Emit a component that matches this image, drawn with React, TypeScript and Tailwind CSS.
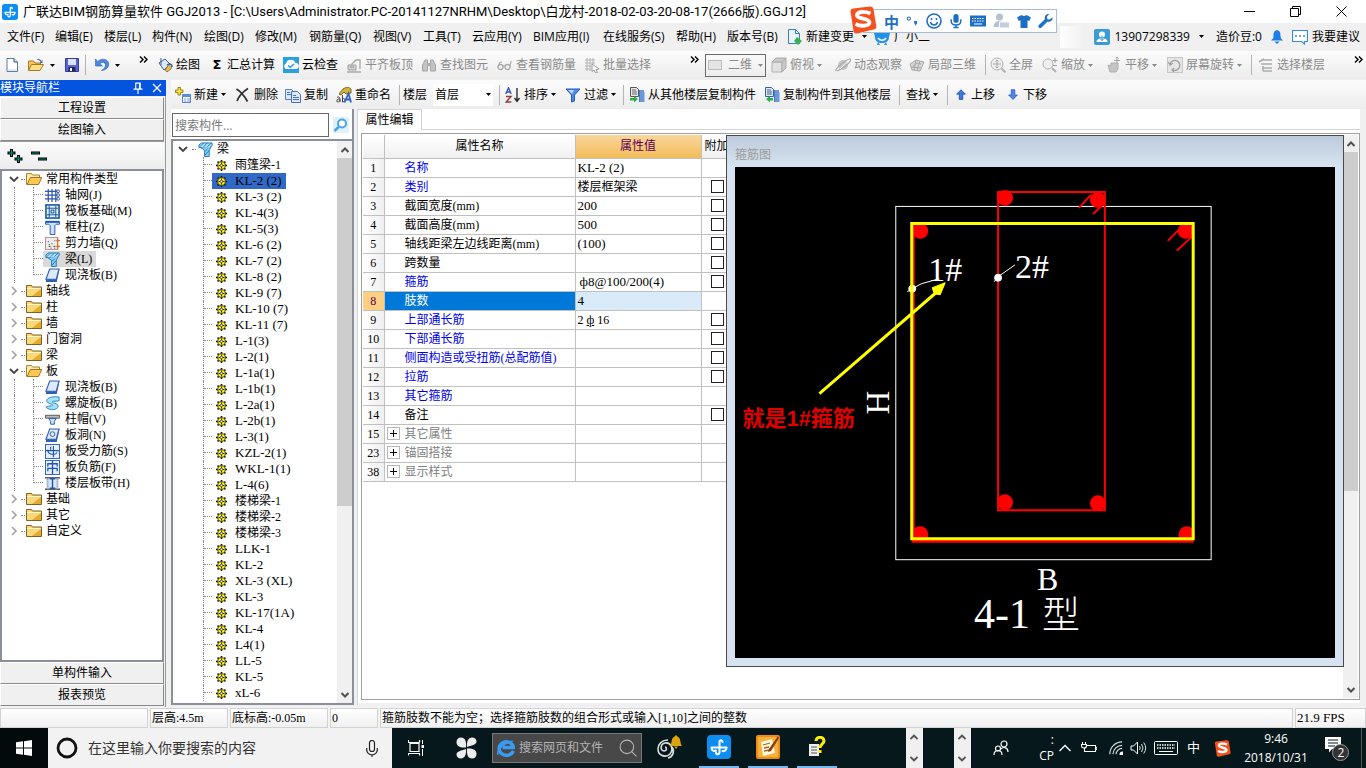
import React from "react";

type Kids = { children?: React.ReactNode };

const UI = "font-['Open_Sans','Noto_Sans_CJK_SC',sans-serif]";
const SONG = "font-['Liberation_Serif','Noto_Sans_CJK_SC',serif]";

const latin = (s: string) => (/^[\x20-\x7f]+$/.test(s) ? "text-[13px]" : "text-xs");

/* ---------- icon helpers ---------- */

function Ico({ children, w = 16, h = 16, box }: Kids & { w?: number; h?: number; box?: string }) {
  return (
    <svg width={w} height={h} viewBox={box ?? "0 0 16 16"} fill="none" className="shrink-0" aria-hidden="true">
      {children}
    </svg>
  );
}

const Caret = () => (
  <svg width="5" height="3" viewBox="0 0 5 3" className="shrink-0" aria-hidden="true">
    <path d="M0 0h5L2.500 3z" fill="currentColor" />
  </svg>
);

const More = () => (
  <Ico w={9} h={7} box="0 0 9 7">
    <path d="M1 .5l3 3-3 3M5 .5l3 3-3 3" stroke="#000" strokeWidth="1.400" />
  </Ico>
);

const AppLogo = ({ size = 16 }: { size?: number }) => (
  <Ico w={size} h={size} box="0 0 24 24">
    <rect width="24" height="24" rx="4" fill="#0c8ff0" />
    <path d="M4.500 12.500h15M12.500 6v11M4.500 12.500c0 3.500 2.500 4 4.500 3M19.500 12.500c0 3-2 4-4 3.500M12.500 6.500c.3-2 3-1.500 3 .5M12.500 17c0 3-3.500 3-3.500.8" stroke="#fff" strokeWidth="2" strokeLinecap="round" />
  </Ico>
);

const icons = {
  newFile: <Ico><path d="M3 1.500h7l3.500 3.500v9.500H3z" fill="#fff" stroke="#5d7aa8" /><path d="M10 1.500V5h3.500" fill="#dbe6f5" stroke="#33507f" /><path d="M4 13h9" stroke="#c4d2ea" /></Ico>,
  open: <Ico w={17}><path d="M1 13V4h5l1.500 2H13v2" fill="#f6c75c" stroke="#a87a1e" /><path d="M1 13.500L4 7.500h12l-3.500 6z" fill="#ffdf86" stroke="#a87a1e" /><path d="M9 3c2-2 4-1 5 1l1-1v3h-3l1-1c-1-2-2-2-4-2z" fill="#4d6ea8" /></Ico>,
  save: <Ico><path d="M1.500 1.500h13v13h-13z" fill="#5a62d8" stroke="#343b9c" /><path d="M4 2h8v6H4z" fill="#dbe4ff" /><path d="M4.500 10h7v4.500h-7z" fill="#20264f" /><path d="M6 11h2v3H6z" fill="#fff" /></Ico>,
  undo: <Ico><path d="M1.500 2v7h7L6 6.800c2-2.500 5.500-1.300 5.500 1.200 0 2.200-1.500 4-4 5.500 5-.5 7.500-3.500 7.200-6.800C14.200 1.800 7.500.6 3.800 4.500z" fill="#4f86dd" stroke="#2d5cb0" strokeWidth=".6" /></Ico>,
  draw: <Ico><path d="M2 6l6-4 5 5-6 6z" fill="#dce9f9" stroke="#3d5f96" /><path d="M4 1v7" stroke="#3d5f96" /><path d="M8 13l4-6 3 1-1 4-4 3z" fill="#e7b84a" stroke="#6b5a2a" strokeWidth=".7" /><path d="M10 8c3-2 5-1 5 2" stroke="#2b63c0" strokeWidth="1.500" /></Ico>,
  cloud: <Ico><rect width="16" height="16" fill="#2b9fe6" /><path d="M3 12a3 3 0 0 1 0-5.500A5 5 0 0 1 12.500 6 3 3 0 0 1 13 12z" fill="#fff" /><path d="M5 8.500l2.200 2L11 7" stroke="#2b9fe6" strokeWidth="1.500" /></Ico>,
  align: <Ico><path d="M2 8h8v5H2z" fill="#d0d0d0" stroke="#a2a2a2" /><path d="M1 15h14M5 8l5-5h4v9M4 10h4" stroke="#a8a8a8" strokeWidth="1.300" /></Ico>,
  find: <Ico><path d="M1.500 14V8L4 3h2.500v11zM14.500 14V8L12 3H9.500v11z" fill="#c4c4c4" stroke="#a4a4a4" /><path d="M6 6h4v3H6z" fill="#adadad" /></Ico>,
  glasses: <Ico><circle cx="3.500" cy="10" r="2.500" stroke="#aaa" strokeWidth="1.300" /><circle cx="10.500" cy="10" r="2.500" stroke="#aaa" strokeWidth="1.300" /><path d="M2 8c0-2 1-3 3-3M13 10c0-3 1-4 1-6M6 9h2" stroke="#aaa" strokeWidth="1.200" /></Ico>,
  batch: <Ico><path d="M1 3h10M1 6h10M1 9h6M1 12h6M3 1v13M6 1v13M9 1v6" stroke="#b4b4b4" /><path d="M8 7l7 5-3 .5 1.500 3-2 .5-1.500-3-2 1.500z" fill="#fff" stroke="#999" /></Ico>,
  cube: <Ico><path d="M1 5h10v10H1z" fill="#e2e2e2" stroke="#b0b0b0" /><path d="M1 5l4-4h10l-4 4zM11 5l4-4v10l-4 4z" fill="#c9c9c9" stroke="#aaa" /></Ico>,
  orbit: <Ico><circle cx="8" cy="8" r="5" fill="#c6c6c6" /><path d="M1 14C0 11 12 2 15 2s-2 7-13 12" stroke="#a8a8a8" strokeWidth="1.200" /><path d="M5 12l7-7" stroke="#eee" /></Ico>,
  local3d: <Ico><path d="M1 7l6-4 8 2-4 9-8-1z" fill="#d6d6d6" stroke="#aaa" /><path d="M4 9l4-3 4 1M7 3l-2 10M11 4L8 13M2 10l10 1" stroke="#aaa" /></Ico>,
  full: <Ico><circle cx="7" cy="7" r="6" stroke="#b4b4b4" fill="#efefef" /><path d="M7 3v8M3 7h8M5.500 4.500L7 3l1.500 1.500M5.500 9.500L7 11l1.500-1.500" stroke="#aaa" /><path d="M11.500 11.500l4 4" stroke="#b0b0b0" strokeWidth="2" /></Ico>,
  zoom: <Ico><circle cx="6" cy="7" r="5" stroke="#b4b4b4" fill="#efefef" /><path d="M10 11l4 4" stroke="#b0b0b0" strokeWidth="2" /><path d="M13 1v5M10.500 3.500h5M11 8.500h4" stroke="#9e9e9e" /></Ico>,
  pan: <Ico><path d="M2 8l3 1V6h7v6l-2 3H4z" fill="#c4c4c4" stroke="#b0b0b0" /><path d="M11 0v7M8 3.500h6M10 1.500L11 0l1.500 1.500" stroke="#a5a5a5" /></Ico>,
  rotate: <Ico><rect x=".5" y=".5" width="15" height="15" fill="#e6e6e6" stroke="#c6c6c6" /><path d="M3 7a5 5 0 1 1 3 6M1.500 5L3 8l3-2M7 15l-2-2 2-2" stroke="#9f9f9f" strokeWidth="1.300" /></Ico>,
  floor: <Ico><path d="M3 3h11M3 7h11M5 9v5M5 11h9M5 14h9M1 5l5-3" stroke="#ababab" strokeWidth="1.500" /></Ico>,
  add: <Ico><path d="M7.500 7.500h8v8h-8z" fill="#f4f8ff" stroke="#5b7fc4" /><path d="M7 7h9v3H7z" fill="#5b8ae0" /><path d="M9 12h2m1 0h3M9 14h2m1 0h3" stroke="#7d9fd8" /><path d="M3 .5h2.500V3H8v2.500H5.500V8H3V5.500H.5V3H3z" fill="#ffe14d" stroke="#9c8411" /></Ico>,
  del: <Ico><path d="M1.500 2C5 4 10 10 12.500 14.500M13 1.500C9 4 4 9 2 14" stroke="#333" strokeWidth="1.800" /></Ico>,
  copy: <Ico><path d="M.5 2.500h6l2 2v8h-8z" fill="#dbe8fc" stroke="#5b7fc4" /><path d="M6.500 4.500h6l3 3v8h-9z" fill="#dbe8fc" stroke="#4b72bc" /><path d="M8 8.500h3M8 10.500h6M8 12.500h6M2 5.500h3M2 7.500h4" stroke="#4b72bc" /></Ico>,
  rename: <Ico><path d="M3 7l4-5c3-2 6-2 8 0v4l-5 1-2-2-3 3z" fill="#d8b33c" stroke="#6f6426" /><path d="M1 10.500c2-1.500 3.500 0 3 4.500M4 12c-4 0-4 3-2 3 1 0 2-1 2-2M6.500 8v7M6.500 12c3-2 3 3 0 3" stroke="#333" strokeWidth=".9" /><path d="M8.500 15.500l4-9 2.500 9M9.500 12.500h4" stroke="#2f63c9" strokeWidth="1.800" /></Ico>,
  sort: <Ico><path d="M.8 7L3.500.8 6.200 7M1.800 5h3.400" stroke="#2b55b5" strokeWidth="1.300" /><path d="M1 9.500h5L1.200 15H6.300" stroke="#943b3b" strokeWidth="1.500" /><path d="M12 1v13M9.500 11l2.500 3.500 2.500-3.500" stroke="#222" strokeWidth="1.300" /></Ico>,
  filter: <Ico><path d="M1 2h14l-5.500 6v6l-3 1V8z" fill="#4f8be8" stroke="#2458b5" /><path d="M3 3h6l-2 4z" fill="#b9d6ff" /></Ico>,
  copyFrom: <Ico><path d="M1.500.5h6l2 2v7h-8z" fill="#e8e8e8" stroke="#555" /><path d="M3 3h4M3 5h5M3 7h5" stroke="#666" /><path d="M11 4h4M10.500 6h5M10.500 8h5M10.500 10h5M10.500 12h5M10.500 14h5" stroke="#3f7cd0" strokeWidth="1.300" /><path d="M1 11h4V9l4 3-4 3.500v-2H1z" fill="#2fae46" /><path d="M10.500 3v12" stroke="#3f7cd0" /></Ico>,
  copyTo: <Ico><path d="M1.500.5h6l2 2v7h-8z" fill="#e8e8e8" stroke="#2d62a8" /><path d="M3 3h4M3 5h5M3 7h5" stroke="#2d62a8" /><path d="M11 4h4M10.500 6h5M10.500 8h5M10.500 10h5M10.500 12h5M10.500 14h5" stroke="#3f7cd0" strokeWidth="1.300" /><path d="M9 11H6V9l-4 3 4 3.500v-2h3z" fill="#2fae46" /><path d="M10.500 3v12" stroke="#3f7cd0" /></Ico>,
  up: <Ico w={14} h={14}><path d="M8 2l5 5h-3v6H6V7H3z" fill="#3f78df" stroke="#2453ad" /></Ico>,
  down: <Ico w={14} h={14}><path d="M8 13L3 8h3V2h4v6h3z" fill="#4f86e6" stroke="#2f5fc0" /></Ico>,
};

/* ---------- title, menus and toolbars ---------- */

function TitleBar() {
  return (
    <header className="flex h-[23px] shrink-0 items-center bg-white pl-0.5 pr-0.5">
      <AppLogo />
      <h1 className="ml-[5px] flex-1 whitespace-nowrap font-['Roboto','Noto_Sans_CJK_SC',sans-serif] text-[13px] font-normal text-black">
        广联达BIM钢筋算量软件 GGJ2013 - [C:\Users\Administrator.PC-20141127NRHM\Desktop\白龙村-2018-02-03-20-08-17(2666版).GGJ12]
      </h1>
      <div className="flex">
        <button aria-label="最小化" className="flex h-5 w-[46px] items-center justify-center"><Ico w={11} h={11} box="0 0 11 11"><path d="M0 5.500h11" stroke="#000" /></Ico></button>
        <button aria-label="还原" className="flex h-5 w-[46px] items-center justify-center"><Ico w={11} h={11} box="0 0 11 11"><path d="M.5 2.500h8v8h-8zM2.500 2.500v-2h8v8h-2" stroke="#000" /></Ico></button>
        <button aria-label="关闭" className="flex h-5 w-[46px] items-center justify-center"><Ico w={11} h={11} box="0 0 11 11"><path d="M.5.5l10 10M10.500.5l-10 10" stroke="#000" /></Ico></button>
      </div>
    </header>
  );
}

const MENUS = ["文件(F)", "编辑(E)", "楼层(L)", "构件(N)", "绘图(D)", "修改(M)", "钢筋量(Q)", "视图(V)", "工具(T)", "云应用(Y)", "BIM应用(I)", "在线服务(S)", "帮助(H)", "版本号(B)"];

function MenuBar() {
  return (
    <nav className="flex h-[27px] shrink-0 items-center whitespace-nowrap bg-[#f0f0f0] pr-1.5 text-xs text-black">
      <div className="grid grid-cols-[48px_49px_48px_52px_51px_54px_64px_50px_49px_61px_70px_73px_51px_60px] pl-[7px]">
        {MENUS.map((m) => <button key={m} className="text-left">{m}</button>)}
      </div>
      <button className="flex items-center gap-[3px]">
        <Ico><path d="M1.500.5h7l4 4v10h-11z" fill="#eaf4ff" stroke="#3c7cc6" /><path d="M8.500.5v4h4" stroke="#3c7cc6" /><path d="M10 8l5 4-4 4-4-4z" fill="#37b24a" /></Ico>
        新建变更
      </button>
      <span className="ml-2"><Caret /></span>
      <button className="ml-[7px] flex items-center gap-1">
        <Ico><path d="M0 4h2c3-3 9-3 12 0h2l-1 4c0 4-3 6-7 6s-7-2-7-6z" fill="#2191e8" /><path d="M4 13l-1 3h3zM12 13l1 3h-3z" fill="#2191e8" /><path d="M4 9c2 3 6 3 8 0" stroke="#fff" strokeWidth="1.500" /></Ico>
        广小二
      </button>
      <div className="ml-auto flex items-center">
        <span className="mr-2.5 h-[22px] w-6 bg-linear-to-r from-white to-[#f0f0f0]" />
        <Ico><rect width="16" height="16" rx="2" fill="#3b9bd4" /><circle cx="8" cy="5.500" r="3" fill="#fff" /><path d="M2.500 13c0-5 11-5 11 0z" fill="#fff" /><path d="M8 6.500v5M6 9.500L8 11.500l2-2" stroke="#3b9bd4" /></Ico>
        <span className="ml-1 mr-[9px]">13907298339</span>
        <span className="mr-3"><Caret /></span>
        造价豆:0
        <span className="ml-2 mr-2"><Ico w={14}><path d="M8 0c4 1 4 4 4 7 0 2 1 3 3 5H1c2-2 3-3 3-5 0-3 0-6 4-7z" fill="#1e7fe8" /><path d="M5 13h6l-3 3z" fill="#1e7fe8" /></Ico></span>
        <Ico><path d="M.5 1.500h15v11h-3V15l-3-2.500h-9z" fill="#fff" stroke="#3a8be0" strokeWidth="1.200" /><path d="M3 7h2m2 0h2m2 0h2" stroke="#3a8be0" strokeWidth="1.500" /></Ico>
        <button className="ml-1">我要建议</button>
      </div>
    </nav>
  );
}

function Tool({ icon, label, caret, off }: { icon?: React.ReactNode; label: string; caret?: boolean; off?: boolean }) {
  return (
    <button className={off ? "flex items-center gap-[3px] whitespace-nowrap text-[#8a8a8a]" : "flex items-center gap-[3px] whitespace-nowrap text-black"}>
      {icon}
      {label}
      {caret && <Caret />}
    </button>
  );
}

const Sep = () => <span className="h-5 w-px self-center bg-[#b4b4b4]" />;

function MainToolbar() {
  return (
    <div role="toolbar" className="flex h-[30px] shrink-0 items-center bg-[#f0f0f0] text-xs">
      <div className="grid h-7 w-[155px] grid-cols-[23px_23px_14px_21px_9px_21px_24px_1fr] items-center bg-linear-to-b from-[#fcfcfc] to-[#ececec] pl-1">
        <button aria-label="新建">{icons.newFile}</button>
        <button aria-label="打开">{icons.open}</button>
        <Caret />
        <button aria-label="保存">{icons.save}</button>
        <Sep />
        <button aria-label="撤销">{icons.undo}</button>
        <Caret />
        <span className="-mt-3"><More /></span>
      </div>
      <div className="grid h-7 w-[549px] grid-cols-[53px_73px_63px_75px_76px_87px_106px_1fr] items-center bg-linear-to-b from-[#fcfcfc] to-[#ececec] pl-0.5">
        <Tool icon={icons.draw} label="绘图" />
        <Tool icon={<b className="w-[14px] text-center font-['DejaVu_Sans'] text-[13px]">Σ</b>} label="汇总计算" />
        <Tool icon={icons.cloud} label="云检查" />
        <Tool icon={icons.align} label="平齐板顶" off />
        <Tool icon={icons.find} label="查找图元" off />
        <Tool icon={icons.glasses} label="查看钢筋量" off />
        <Tool icon={icons.batch} label="批量选择" off />
        <span className="-mt-3"><More /></span>
      </div>
      <div className="grid h-7 flex-1 grid-cols-[66px_64px_74px_76px_5px_52px_64px_61px_84px_7px_96px_1fr] items-center bg-linear-to-b from-[#fcfcfc] to-[#ececec] pl-px">
        <button className="flex h-[23px] w-[61px] items-center justify-between border border-[#6a6a6a] px-0.5 text-[#8a8a8a]">
          <span className="h-2.5 w-3.5 border border-[#bbb] bg-[#e4e4e4]" />二维<Caret />
        </button>
        <Tool icon={icons.cube} label="俯视" caret off />
        <Tool icon={icons.orbit} label="动态观察" off />
        <Tool icon={icons.local3d} label="局部三维" off />
        <Sep />
        <Tool icon={icons.full} label="全屏" off />
        <Tool icon={icons.zoom} label="缩放" caret off />
        <Tool icon={icons.pan} label="平移" caret off />
        <Tool icon={icons.rotate} label="屏幕旋转" caret off />
        <Sep />
        <Tool icon={icons.floor} label="选择楼层" off />
        <span className="-mt-3"><More /></span>
      </div>
    </div>
  );
}

function EditToolbar() {
  return (
    <div role="toolbar" className="grid h-[29px] shrink-0 grid-cols-[60px_50px_51px_63px_4px_30px_66px_6px_60px_58px_6px_135px_135px_7px_41px_7px_52px_1fr] items-center bg-linear-to-b from-[#fcfcfc] to-[#ececec] pl-1 text-xs">
      <Tool icon={icons.add} label="新建" caret />
      <Tool icon={icons.del} label="删除" />
      <Tool icon={icons.copy} label="复制" />
      <Tool icon={icons.rename} label="重命名" />
      <Sep />
      <span>楼层</span>
      <button aria-label="楼层" className="mr-1.5 flex h-[22px] items-center justify-between bg-white px-0.5 text-left">首层<Caret /></button>
      <Sep />
      <Tool icon={icons.sort} label="排序" caret />
      <Tool icon={icons.filter} label="过滤" caret />
      <Sep />
      <Tool icon={icons.copyFrom} label="从其他楼层复制构件" />
      <Tool icon={icons.copyTo} label="复制构件到其他楼层" />
      <Sep />
      <Tool label="查找" caret />
      <Sep />
      <Tool icon={icons.up} label="上移" />
      <Tool icon={icons.down} label="下移" />
    </div>
  );
}

/* ---------- module navigation ---------- */

const FolderClosed = () => (
  <Ico><path d="M.5 13.500v-11h5l1 1.500h9v9.500z" fill="#f9d978" stroke="#7a6228" /><path d="M1 5.500h14" stroke="#fff3c8" /><path d="M6 13l9-7v7z" fill="#e9a92f" /></Ico>
);
const FolderOpen = () => (
  <Ico><path d="M.5 13.500v-11h5l1 1.500h7V7" fill="#fbe9a8" stroke="#a8842c" /><path d="M1 13.500L4.500 6.500h11.300L12.500 13.500z" fill="#fbc94f" stroke="#a8742c" /></Ico>
);

const BeamIcon = () => (
  <Ico w={15} h={15}><path d="M1 3l3-2h11v3l-3 2H1z" fill="#aee0fb" stroke="#1c78b8" /><path d="M3 6l4 3v6.500h5V9l2-4" fill="#8ccdf4" stroke="#1c78b8" /><path d="M2 5l4-4M6 5l4-4M10 5l4-4M7.500 14l4.500-5M7.500 10l3-3" stroke="#1c78b8" /></Ico>
);
const SlabIcon = ({ hole }: { hole?: boolean }) => (
  <Ico w={15} h={15}><path d="M5 1h10l-3 11H1z" fill="#dceafc" stroke="#2f5fae" strokeWidth="1.200" /><path d="M1 12h11l3-11v2.500L12.500 15H1z" fill="#2f5fae" />{hole && <circle cx="8" cy="6.500" r="2.500" stroke="#2f5fae" />}</Ico>
);

const kindIcons: Record<string, React.ReactNode> = {
  grid: <Ico w={15} h={15}><path d="M3.500 1v14M7.500 1v14M11.500 1v14M0 3.500h13M0 7.500h13M0 11.500h13" stroke="#2f56a8" strokeWidth="1.300" /><circle cx="14" cy="3.500" r="1.500" stroke="#2f56a8" /><circle cx="14" cy="7.500" r="1.500" stroke="#2f56a8" /><circle cx="14" cy="11.500" r="1.500" stroke="#2f56a8" /></Ico>,
  raft: <Ico w={15} h={15}><rect x="1" y="1" width="14" height="14" fill="#e4f2fb" stroke="#0d4f93" strokeWidth="1.600" /><path d="M4.500 2v12M11.500 2v12M2 4.500h12M2 11.500h12" stroke="#0d4f93" /><rect x="6.500" y="6.500" width="3" height="3" stroke="#0d4f93" /></Ico>,
  column: <Ico w={15} h={15}><path d="M.5 1.500h15v3H12L10.500 6v9.500h-5V6L4 4.500H.5z" fill="#cfe2fb" stroke="#1e55b3" /><path d="M1 2h14" stroke="#1e55b3" strokeWidth="2" /></Ico>,
  wall: <Ico w={15} h={15}><rect x=".5" y="1.500" width="13" height="13" fill="#ececec" stroke="#b88" /><path d="M3 6h1m3 2h1m2-3h1M4 11h2m3 0h2M6 13h1m-3-4h1m5 4h1" stroke="#333" /><path d="M13.500 2v13M12 5h4M12 11h4" stroke="#d9702b" strokeWidth="1.300" /></Ico>,
  beam: <BeamIcon />,
  slab: <SlabIcon />,
  spiral: <Ico w={15} h={15}><path d="M15 1C5 0 1 3 2 6c2 3 7 2 6 4-1 1-4 0-7 2 4 4 13 3 13-1 0-4-7-3-6-5 1-1 4 0 7-1z" fill="#a9e0fa" stroke="#1e83c4" /></Ico>,
  cap: <Ico w={15} h={15}><path d="M.5 3.500h15v3H.5z" fill="#bbb" stroke="#555" /><path d="M4 7h8l-2 3v3H6v-3z" fill="#d6e6fb" stroke="#1e55b3" /></Ico>,
  hole: <SlabIcon hole />,
  force: <Ico w={15} h={15}><rect x=".5" y=".5" width="15" height="15" fill="#e7eefb" stroke="#2f5fae" /><path d="M1 7h14M9 2v12M3 6c0 6 8 6 10 3M6 3v3" stroke="#1e55b3" strokeWidth="1.200" /></Ico>,
  negative: <Ico w={15} h={15}><rect x=".5" y=".5" width="15" height="15" fill="#e7eefb" stroke="#2f5fae" /><path d="M8 1v14M3 12V9h10v3M3 7V4h10v3" stroke="#1e55b3" strokeWidth="1.400" /></Ico>,
  band: <Ico w={15} h={15}><path d="M0 2h16M0 14h16" stroke="#333" strokeWidth="1.500" /><path d="M1 3h14v10H1z" fill="#d6e6fb" /><path d="M3 3v10M13 3v10" stroke="#555" strokeDasharray="1 1" /><path d="M8 3v10M5 3h6M5 13h6" stroke="#1e55b3" strokeWidth="1.500" /></Ico>,
};

type Group = { name: string; kids?: [string, string][] };
const GROUPS: Group[] = [
  { name: "常用构件类型", kids: [["grid", "轴网(J)"], ["raft", "筏板基础(M)"], ["column", "框柱(Z)"], ["wall", "剪力墙(Q)"], ["beam", "梁(L)"], ["slab", "现浇板(B)"]] },
  { name: "轴线" }, { name: "柱" }, { name: "墙" }, { name: "门窗洞" }, { name: "梁" },
  { name: "板", kids: [["slab", "现浇板(B)"], ["spiral", "螺旋板(B)"], ["cap", "柱帽(V)"], ["hole", "板洞(N)"], ["force", "板受力筋(S)"], ["negative", "板负筋(F)"], ["band", "楼层板带(H)"]] },
  { name: "基础" }, { name: "其它" }, { name: "自定义" },
];

function Chevron({ open }: { open?: boolean }) {
  return (
    <Ico w={10} h={10} box="0 0 10 10">
      {open ? <path d="M1 3l4 4 4-4" stroke="#444" strokeWidth="1.800" /> : <path d="M3 1l4 4-4 4" stroke="#a0a0a0" strokeWidth="1.600" />}
    </Ico>
  );
}

function ModuleTree() {
  return (
    <ul className="min-h-0 flex-1 overflow-hidden border-2 border-[#8a8f99] bg-white">
      {GROUPS.map((g) => (
        <li key={g.name}>
          <div className="flex h-4 items-center pl-[7px]">
            <Chevron open={!!g.kids} />
            <span className="ml-0.5 mr-px w-1 border-b border-dotted border-[#888]" />
            {g.kids ? <FolderOpen /> : <FolderClosed />}
            <span className="ml-1">{g.name}</span>
          </div>
          {g.kids && (
            <ul>
              {g.kids.map(([k, label], i) => (
                <li key={label} className="flex h-4 items-center whitespace-nowrap pl-3">
                  <span className="h-full w-[19px] border-l border-dotted border-[#888]" />
                  <span className={i === g.kids!.length - 1 ? "h-full w-[10px]" : "h-full w-[10px] border-l border-dotted border-[#888]"}>
                    <span className={i === g.kids!.length - 1 ? "block h-1/2 border-b border-l border-dotted border-[#888]" : "block h-1/2 border-b border-dotted border-[#888]"} />
                  </span>
                  <span className={label === "梁(L)" ? "flex h-4 items-center gap-[5px] bg-[#d9d9d9] pl-0.5 pr-1" : "flex h-4 items-center gap-[5px] pl-0.5"}>
                    {kindIcons[k]}
                    {label}
                  </span>
                </li>
              ))}
            </ul>
          )}
        </li>
      ))}
    </ul>
  );
}

function NavButton({ children }: Kids) {
  return <button className="h-[22px] w-full shrink-0 border border-b-[#8a8a8a] border-l-white border-r-[#8a8a8a] border-t-white bg-[#f0f0f0] text-center">{children}</button>;
}

function ModuleNav() {
  return (
    <aside className={`flex w-[166px] shrink-0 flex-col bg-[#f0f0f0] text-xs text-black ${SONG}`}>
      <div className="flex h-4 shrink-0 items-center bg-[#0454e0] text-white">
        <span className="flex-1">模块导航栏</span>
        <button aria-label="固定"><Ico w={12} h={12}><path d="M5 1v8M11 1v8M4.500 1.500h7M2 9.500h12M8 10v6M10 2v7" stroke="#fff" strokeWidth="1.500" /></Ico></button>
        <button aria-label="关闭" className="ml-2 mr-1"><Ico w={10} h={10} box="0 0 10 10"><path d="M1 1l8 8M9 1L1 9" stroke="#fff" strokeWidth="1.200" /></Ico></button>
      </div>
      <div className="flex min-h-0 flex-1 flex-col border-r border-[#999] pb-px pr-px pt-px">
        <NavButton>工程设置</NavButton>
        <NavButton>绘图输入</NavButton>
        <div className="flex h-7 shrink-0 items-center gap-2 border-t border-[#9a9a9a] bg-linear-to-b from-[#fcfcfc] to-[#ececec] pl-[7px]">
          <button aria-label="全部展开"><Ico w={16} h={16}><path d="M4.500 1v8M.5 5h8" stroke="#000" strokeWidth="3" /><path d="M4.500 2v6M1.500 5h6" stroke="#0c8c74" strokeWidth="1.200" /><path d="M11.500 7v8M7.500 11h8" stroke="#000" strokeWidth="3" /><path d="M11.500 8v6M8.500 11h6" stroke="#0c8c74" strokeWidth="1.200" /></Ico></button>
          <button aria-label="全部折叠"><Ico w={16} h={16}><path d="M0 5h9M7 11h9" stroke="#000" strokeWidth="3" /><path d="M1 5h7M8 11h7" stroke="#0c8c74" strokeWidth="1.200" /></Ico></button>
        </div>
        <ModuleTree />
        <NavButton>单构件输入</NavButton>
        <NavButton>报表预览</NavButton>
      </div>
    </aside>
  );
}

/* ---------- component list ---------- */

const COMPONENTS = ["雨篷梁-1", "KL-2 (2)", "KL-3 (2)", "KL-4(3)", "KL-5(3)", "KL-6 (2)", "KL-7 (2)", "KL-8 (2)", "KL-9 (7)", "KL-10 (7)", "KL-11 (7)", "L-1(3)", "L-2(1)", "L-1a(1)", "L-1b(1)", "L-2a(1)", "L-2b(1)", "L-3(1)", "KZL-2(1)", "WKL-1(1)", "L-4(6)", "楼梯梁-1", "楼梯梁-2", "楼梯梁-3", "LLK-1", "KL-2", "XL-3 (XL)", "KL-3", "KL-17(1A)", "KL-4", "L4(1)", "LL-5", "KL-5", "xL-6"];

const Gear = () => (
  <Ico w={11} h={11} box="0 0 11 11">
    <path d="M5.500 0v11M0 5.500h11M1.600 1.600l7.800 7.800M9.400 1.600L1.600 9.400" stroke="#111" strokeWidth="1.600" />
    <circle cx="5.500" cy="5.500" r="4" fill="#fff200" stroke="#222" strokeWidth=".8" />
    <path d="M5.500 2.500v1.500M5.500 7v1.500M2.500 5.500H4M7 5.500h1.500" stroke="#222" />
    <circle cx="5.500" cy="5.500" r="1.200" fill="#fff" stroke="#222" strokeWidth=".8" />
  </Ico>
);

function ScrollBar({ thumb }: { thumb: string }) {
  return (
    <div className="flex w-[15px] shrink-0 flex-col items-center bg-[#f0f0f0]">
      <button aria-label="向上滚动" className="flex h-[17px] w-full shrink-0 items-center justify-center"><Ico w={8} h={6} box="0 0 8 6"><path d="M.5 5L4 1.500 7.500 5" stroke="#505050" strokeWidth="2" /></Ico></button>
      <div className="min-h-0 w-full flex-1"><div className={`w-full bg-[#cdcdcd] ${thumb}`} /></div>
      <button aria-label="向下滚动" className="flex h-[17px] w-full shrink-0 items-center justify-center"><Ico w={8} h={6} box="0 0 8 6"><path d="M.5 1L4 4.500 7.500 1" stroke="#505050" strokeWidth="2" /></Ico></button>
    </div>
  );
}

function ComponentList() {
  return (
    <section className={`flex w-[183px] shrink-0 flex-col border-r-2 border-[#8a8f99] bg-white text-xs text-black ${SONG}`}>
      <div className="flex h-[30px] shrink-0 items-center bg-white pl-px pt-0.5">
        <input aria-label="搜索构件" placeholder="搜索构件..." className={`h-6 w-[157px] border border-[#666] bg-white px-0.5 placeholder:text-[#7a7a7a] ${UI}`} />
        <button aria-label="搜索" className="ml-1"><Ico><rect width="16" height="16" fill="#dff0fa" /><circle cx="9" cy="6.500" r="4" stroke="#4aa5dc" strokeWidth="2" fill="#fff" /><path d="M6 9.500l-4.500 4.500" stroke="#4aa5dc" strokeWidth="2.500" /></Ico></button>
      </div>
      <div className="flex min-h-0 flex-1 border-2 border-r-0 border-[#8a8f99]">
        <div className="min-w-0 flex-1 overflow-hidden">
          <div className="flex h-4 items-center pl-[5px]">
            <Chevron open />
            <span className="ml-1 mr-0.5 w-1 border-b border-dotted border-[#888]" />
            <BeamIcon />
            <span className="ml-1">梁</span>
          </div>
          <ul>
            {COMPONENTS.map((c, i) => (
              <li key={i} className="flex h-4 items-center pl-[30px]">
                <span className="h-full w-[9px] border-l border-dotted border-[#888]"><span className="block h-1/2 border-b border-dotted border-[#888]" /></span>
                <span className={i === 1 ? "flex h-4 items-center gap-2 bg-[#3169c6] px-1" : "flex h-4 items-center gap-2 px-1"}>
                  <Gear />
                  <span className={`leading-4 ${latin(c)}`}>{c}</span>
                </span>
              </li>
            ))}
          </ul>
        </div>
        <ScrollBar thumb="h-[66%]" />
      </div>
    </section>
  );
}

/* ---------- property editor ---------- */

type Row = { n: number; name: string; value?: React.ReactNode; tone: "blue" | "black" | "gray"; box?: boolean };
const ROWS: Row[] = [
  { n: 1, name: "名称", value: "KL-2 (2)", tone: "blue" },
  { n: 2, name: "类别", value: "楼层框架梁", tone: "blue", box: true },
  { n: 3, name: "截面宽度(mm)", value: "200", tone: "black", box: true },
  { n: 4, name: "截面高度(mm)", value: "500", tone: "black", box: true },
  { n: 5, name: "轴线距梁左边线距离(mm)", value: "(100)", tone: "black", box: true },
  { n: 6, name: "跨数量", tone: "black", box: true },
  { n: 7, name: "箍筋", value: <span className="pl-0.5 text-[13px]">ф8@100/200(4)</span>, tone: "blue", box: true },
  { n: 8, name: "肢数", value: "4", tone: "black" },
  { n: 9, name: "上部通长筋", value: <>2 <span className="underline">ф</span> 16</>, tone: "blue", box: true },
  { n: 10, name: "下部通长筋", tone: "blue", box: true },
  { n: 11, name: "侧面构造或受扭筋(总配筋值)", tone: "blue", box: true },
  { n: 12, name: "拉筋", tone: "blue", box: true },
  { n: 13, name: "其它箍筋", tone: "blue" },
  { n: 14, name: "备注", tone: "black", box: true },
  { n: 15, name: "其它属性", tone: "gray" },
  { n: 23, name: "锚固搭接", tone: "gray" },
  { n: 38, name: "显示样式", tone: "gray" },
];
const TONES = { blue: "text-[#0000e8]", black: "text-black", gray: "text-[#808080]" };

function PropertyTable() {
  return (
    <table className="w-[370px] table-fixed border-collapse text-xs leading-none text-black">
      <colgroup>
        <col className="w-[21px]" /><col className="w-[191px]" /><col className="w-[126px]" /><col className="w-[32px]" />
      </colgroup>
      <thead>
        <tr className="h-[23px] bg-linear-to-b from-white to-[#f0f0f0]">
          <th className="border-b border-r border-[#c0c0c0]" />
          <th className="border-b border-r border-[#c0c0c0] font-normal">属性名称</th>
          <th className="border-b border-r border-[#c0c0c0] bg-linear-to-b from-[#f9d699] to-[#f2bc57] font-normal text-[#5a005a]">属性值</th>
          <th className="overflow-hidden whitespace-nowrap border-b border-[#c0c0c0] pl-[3px] text-left font-normal">附加</th>
        </tr>
      </thead>
      <tbody>
        {ROWS.map((r) => {
          const sel = r.n === 8;
          const size = typeof r.value === "string" ? latin(r.value) : "text-xs";
          return (
            <tr key={r.n} className="h-[19px]">
              <td className={sel ? "border-b border-r border-[#c0c0c0] bg-[#fdcf83] text-center text-[#5a005a]" : "border-b border-r border-[#c0c0c0] bg-linear-to-r from-white to-[#efefef] text-center"}>{r.n}</td>
              <td className={sel ? "border-b border-r border-[#c0c0c0] bg-[#0078d7] pl-5 text-white" : `border-b border-r border-[#c0c0c0] ${r.tone === "gray" ? "pl-0.5" : "pl-5"} ${TONES[r.tone]}`}>
                <span className="flex items-center whitespace-nowrap">
                  {r.tone === "gray" && (
                    <button aria-label={`展开${r.name}`} className="mr-[5px] flex size-[13px] items-center justify-center border border-[#b8b8b8] bg-white"><Ico w={7} h={7} box="0 0 7 7"><path d="M3.500 0v7M0 3.500h7" stroke="#000" /></Ico></button>
                  )}
                  {r.name}
                </span>
              </td>
              <td className={sel ? `border-b border-r border-[#c0c0c0] bg-[#d9eaf9] pl-0.5 leading-none ${size}` : `border-b border-r border-[#c0c0c0] pl-0.5 leading-none ${size}`}>{r.value}</td>
              <td className="border-b border-[#c0c0c0]">
                {r.box && <input type="checkbox" aria-label={`附加 ${r.name}`} className="mx-auto block size-[13px] appearance-none border border-[#222] bg-white" />}
              </td>
            </tr>
          );
        })}
      </tbody>
    </table>
  );
}

function StirrupDrawing() {
  return (
    <svg viewBox="735 167 600 492" preserveAspectRatio="xMidYMid meet" className="block h-full w-full bg-black" role="img" aria-label="箍筋图 4-1型">
      <rect x="895.500" y="206.500" width="316" height="354" fill="none" stroke="#fff" />
      <g stroke="#f00" strokeWidth="2" fill="none">
        <path d="M998 192h107v319H998z" />
        <path d="M913 225v317h281" strokeWidth="3" />
        <path d="M1079 208l12-13M1093 214l11-10M1168 241l14-14M1177 251l15-14" />
      </g>
      <g fill="#f00">
        <circle cx="1005" cy="198" r="8" /><circle cx="1098" cy="200" r="8" />
        <circle cx="1005" cy="503" r="8" /><circle cx="1098" cy="504" r="8" />
        <circle cx="920" cy="231" r="8" /><circle cx="1186" cy="231" r="8" />
        <path d="M912 539v-4a8 8 0 0 1 16 0v4zM1179 539v-4a8 8 0 0 1 16 0v4z" />
      </g>
      <g stroke="#fff" fill="#fff">
        <path d="M907 292l5-3 9-5 18-5M994 282l4-5 17-12" fill="none" />
        <circle cx="912" cy="289" r="3.500" /><circle cx="998" cy="278" r="3.500" />
      </g>
      <path d="M911.500 223.500h282v316h-282z" fill="none" stroke="#ff0" strokeWidth="3" />
      <path d="M819 394L938 291" stroke="#ff0" strokeWidth="3" />
      <path d="M945 283l-5 12-6-1-2-6z" fill="#ff0" stroke="#ff0" />
      <g fill="#fff" fontFamily="'Liberation Serif','Noto Sans CJK SC',serif">
        <text x="928" y="281" fontSize="34">1#</text>
        <text x="1015" y="278" fontSize="34">2#</text>
        <text x="1037" y="591" fontSize="32">B</text>
        <text y="629" fontSize="42"><tspan x="974">4-1</tspan><tspan x="1042" fontSize="38" fontWeight="300">型</tspan></text>
        <text transform="translate(889 415) rotate(-90)" fontSize="33">H</text>
      </g>
      <text x="742" y="427" fontSize="22" fontWeight="bold" fill="#e00000" fontFamily="'Liberation Sans','Noto Sans CJK SC',sans-serif">就是1#箍筋</text>
    </svg>
  );
}

function PropertyEditor() {
  return (
    <section className={`ml-[3px] flex min-w-0 flex-1 flex-col border-l border-[#d8d8d8] bg-[#f0f0f0] pr-1.5 text-xs text-black ${SONG}`}>
      <div className="flex h-[21px] shrink-0 bg-white">
        <button className="w-[64px] border-r border-t border-[#d4d4d4] bg-white">属性编辑</button>
        <span className="flex-1 border-b border-[#d4d4d4]" />
      </div>
      <div className="mb-0.5 flex min-h-0 flex-1 bg-white p-[3px] pr-0">
        <div className="relative flex min-w-0 flex-1 border border-[#a0a0a0] p-px">
          <div className="min-w-0 flex-1 overflow-hidden"><PropertyTable /></div>
          <ScrollBar thumb="h-[64%]" />
          <div role="dialog" aria-label="箍筋图" className="absolute bottom-[32px] left-[364px] right-[15px] top-px flex flex-col border border-[#4a4a4a] bg-[#d7e3f0] px-2 pb-2">
            <div className="-mx-2 flex h-[31px] shrink-0 items-center bg-linear-to-b from-[#bccbdb] to-[#d7e3f0] px-2 pt-[7px] text-[#9a9a9a]">箍筋图</div>
            <div className="min-h-0 flex-1"><StirrupDrawing /></div>
          </div>
        </div>
      </div>
    </section>
  );
}

/* ---------- status bar and taskbar ---------- */

function StatusCell({ children, className }: Kids & { className: string }) {
  return <span className={`h-5 overflow-hidden whitespace-nowrap border border-[#d2d2d2] bg-linear-to-b from-white to-[#f0f0f0] leading-[18px] ${className}`}>{children}</span>;
}

function StatusBar() {
  return (
    <footer className={`flex h-[21px] shrink-0 items-center gap-0.5 bg-[#f4f4f4] text-xs text-black ${SONG}`}>
      <StatusCell className="w-[148px]" />
      <StatusCell className="w-[78px] pl-px">层高:4.5m</StatusCell>
      <StatusCell className="w-[98px] pl-px">底标高:-0.05m</StatusCell>
      <StatusCell className="w-12 pl-px">0</StatusCell>
      <StatusCell className="min-w-0 flex-1 pl-px">箍筋肢数不能为空；选择箍筋肢数的组合形式或输入[1,10]之间的整数</StatusCell>
      <StatusCell className="w-[71px] pl-px text-[13px]">21.9 FPS</StatusCell>
    </footer>
  );
}

const SogouMark = ({ size = 16 }: { size?: number }) => (
  <Ico w={size} h={size} box="0 0 28 28">
    <path d="M1.500 5.500Q1 3 4 2.500L21 .5q3-.3 3.500 2.500L27.300 20q.4 3-2.500 3.500L8 27.500q-3 .5-3.500-2.500z" fill="#f4511e" />
    <path d="M21.500 7.500c-6-2.500-13-2-13.500 1.500-.4 4 12 3 12.500 7 .3 4-8 5-14 2" stroke="#fff" strokeWidth="3.800" />
  </Ico>
);

function MiniScroll() {
  return (
    <div className="flex h-10 w-[17px] flex-col items-center justify-between bg-[#f0f0f0] py-[6px]">
      <Ico w={8} h={6} box="0 0 8 6"><path d="M.5 5L4 1.500 7.500 5" stroke="#505050" strokeWidth="1.800" /></Ico>
      <Ico w={8} h={6} box="0 0 8 6"><path d="M.5 1L4 4.500 7.500 1" stroke="#505050" strokeWidth="1.800" /></Ico>
    </div>
  );
}

function TaskApp({ children, label }: Kids & { label: string }) {
  return <button aria-label={label} className="flex h-10 w-10 items-center justify-center border-b-2 border-[#76b9f0]">{children}</button>;
}

function TaskBar() {
  return (
    <footer className={`flex h-10 shrink-0 items-center bg-[#06181c] text-white ${UI}`}>
      <button aria-label="开始" className="flex h-full w-12 items-center justify-center bg-[#020a0c]">
        <Ico><path d="M0 2.300L7 1.300v6.200H0zM8 1.200L16 0v7.500H8zM0 8.500h7v6.200l-7-1zM8 8.500h8V16l-8-1.200z" fill="#fff" /></Ico>
      </button>
      <div className="flex h-full w-[344px] items-center bg-[#f2f2f2] pl-2 pr-[14px]">
        <Ico w={22} h={22} box="0 0 22 22"><circle cx="11" cy="11" r="9" stroke="#111" strokeWidth="2.800" /></Ico>
        <input aria-label="搜索" placeholder="在这里输入你要搜索的内容" className="ml-2.5 min-w-0 flex-1 bg-transparent text-sm placeholder:text-[#333]" />
        <Ico w={12} h={17} box="0 0 12 17"><path d="M3.500 3a2.500 2.500 0 0 1 5 0v6a2.500 2.500 0 0 1-5 0zM.7 8v2a5 4.500 0 0 0 10.600 0V8M6 14.500V17" stroke="#222" strokeWidth="1.200" /></Ico>
      </div>
      <button aria-label="任务视图" className="ml-4"><Ico><path d="M2 3.500h9v8H2zM.5 0v2.500h11M.5 15.500v-2h11v2M11.500 0v2.500" stroke="#fff" strokeWidth="1.200" /><path d="M14.500 0v4M14.500 9v7" stroke="#fff" /><path d="M13.500 5h2.500v3h-2.500z" fill="#fff" /></Ico></button>
      <button aria-label="浏览器" className="ml-8">
        <Ico w={21} h={22} box="0 0 21 22">
          <g fill="#ececec">
            <path d="M10 10.500C3 11 .5 8.500.5 5 .5 2 2.500.5 5 .5c4 0 5.500 3.500 5 10z" />
            <path d="M11 10C10.500 4 12.500.5 16 .5c3 0 4.500 2 4.500 4C20.500 7.500 17 8 11 10z" />
            <path d="M11 11.500c7-.5 9.500 2 9.500 5.500 0 3-2 4.500-4.500 4.500-4 0-5.500-3.500-5-10z" />
            <path d="M10 12c.5 6-1.500 9.500-5 9.500-3 0-4.500-2-4.500-4C.5 14.500 4 14 10 12z" />
          </g>
        </Ico>
      </button>
      <div className="ml-[15px] flex h-[30px] w-[150px] items-center border border-[#777] bg-[#484848] px-1">
        <Ico w={18} h={18}><path d="M14.500 10.500a6.500 6 0 1 1 .3-3H5" stroke="#3a9bf2" strokeWidth="3" /><path d="M1 14c-2-3 6-12 13-12" stroke="#3a9bf2" strokeWidth="1.500" /></Ico>
        <span className="ml-1 flex-1 whitespace-nowrap text-xs text-[#b4b4b4]">搜索网页和文件</span>
        <Ico w={18} h={18}><circle cx="7" cy="7" r="6" stroke="#b4b4b4" /><path d="M11.500 11.500l4 4" stroke="#b4b4b4" /></Ico>
      </div>
      <button aria-label="助手" className="ml-[13px]"><Ico w={28} h={26} box="0 0 28 26"><path d="M10 12c2 0 2 4-1 4-4 0-4-7 1-8 6-1 9 6 5 11-4 4-12 2-12-5 0-5 4-9 10-9M17 12c3 4 1 10-4 11" stroke="#ddd" strokeWidth="1.600" /><path d="M15 11c2-2 1-8 4-9l2-2 2 2c3 1 2 7 4 9zM19 11.500h4L21 14z" fill="#d9a410" /></Ico></button>
      <div className="ml-4 flex gap-[9px]">
        <TaskApp label="广联达"><AppLogo size={24} /></TaskApp>
        <TaskApp label="笔记"><Ico w={24} h={24} box="0 0 24 24"><rect width="24" height="24" rx="2" fill="#f08c10" /><rect x="2" y="2" width="20" height="20" fill="#f7b13d" /><path d="M5 7l11-3 3 14-12 3z" fill="#fff8e0" /><path d="M7 10l7-2M8 13l5-1M8 16l6-1" stroke="#a8641e" strokeWidth="1.300" /><path d="M22 1l-9 13-1 3 3-1 8-13z" fill="#8c3a0a" /></Ico></TaskApp>
        <TaskApp label="帮助"><Ico w={18} h={22} box="0 0 18 22"><path d="M1 8h10v12H1z" fill="#eee" /><path d="M3 11h6M3 14h6M3 17h6" stroke="#555" /><path d="M8 5c0-5 8-5 8 0 0 3-4 3-4 7" stroke="#ffee00" strokeWidth="3" /><path d="M10.500 14h3v3h-3z" fill="#ffee00" /></Ico></TaskApp>
      </div>
      <div className="ml-auto flex items-center">
        <MiniScroll />
        <span className="w-[31px]" />
        <MiniScroll />
        <span className="ml-[22px]"><Ico><circle cx="11" cy="4" r="3" stroke="#fff" strokeWidth="1.200" /><path d="M8 9c3-3 7-1 7 3M1 15c0-6 8-6 8 0" stroke="#fff" strokeWidth="1.200" /><circle cx="5" cy="8.500" r="2.500" stroke="#fff" strokeWidth="1.200" /></Ico></span>
        <span className="ml-[30px] w-[15px] overflow-hidden text-right text-xs leading-4"><span className="block">:</span>CP</span>
        <span className="ml-[5px]"><Ico w={12} h={8} box="0 0 12 8"><path d="M.5 7L6 1.500 11.500 7" stroke="#fff" strokeWidth="1.300" /></Ico></span>
        <span className="ml-2.5"><Ico><path d="M5 5.500h9.500v6H3.500v-3M14.500 7.500h1.500v2h-1.500M1.500 2v2M4.500 2v2M.5 4.500h5v1.500q0 2-2.500 2T.5 6z" stroke="#fff" strokeWidth="1.100" /></Ico></span>
        <span className="ml-3"><Ico w={14} h={14}><path d="M1 15A14 14 0 0 1 15 1M4.500 15A10.500 10.500 0 0 1 15 5M8 15a7 7 0 0 1 7-6.500" stroke="#ddd" strokeWidth="1.300" /><path d="M12 16a3.500 3.500 0 0 1 4-4v4z" fill="#fff" /></Ico></span>
        <span className="ml-[7px]"><Ico w={17}><path d="M.5 6h2.500l4-4v12l-4-4H.500z" stroke="#fff" /><path d="M9 6q1.500 2 0 4M11 4q3 4 0 8M13.200 2.500q4 5.500 0 11" stroke="#ddd" /></Ico></span>
        <span className="ml-[7px]"><Ico w={24} h={14} box="0 0 24 14"><rect x=".5" y=".5" width="23" height="13" rx="1" stroke="#fff" /><path d="M3 4h18M3 7h18" stroke="#fff" strokeWidth="1.400" strokeDasharray="1.500 1" /><path d="M5 10.500h14" stroke="#fff" /></Ico></span>
        <span className="ml-[9px] text-[13px]">中</span>
        <span className="ml-[14px]"><SogouMark size={17} /></span>
        <span className="ml-2.5 w-[70px] whitespace-nowrap text-center text-xs leading-[19px]"><span className="block">9:46</span>2018/10/31</span>
        <button aria-label="通知" className="ml-[13px] mr-[11px]"><Ico w={26} h={26} box="0 0 26 26"><path d="M1 2h16v12H8l-3 3.500V14H1z" fill="#fff" /><path d="M4 5h10M4 8h10M4 11h7" stroke="#06181c" /><circle cx="16.500" cy="17.500" r="8" fill="#333" stroke="#999" /><text x="13.500" y="22" fontSize="12" fill="#fff" fontFamily="Open Sans">2</text></Ico></button>
        <span className="mr-1 h-10 w-px bg-[#555]" />
      </div>
    </footer>
  );
}

function ImeBar() {
  return (
    <div className="absolute right-[309px] top-[6px] flex items-start">
      <span className="z-10 -mr-[14px]"><SogouMark size={28} /></span>
      <div className="mt-[3px] flex h-6 w-[194px] items-center gap-[7px] border border-[#a9bdd2] bg-white pl-[20px] text-[#1d6fc4]">
        <b className="font-['Noto_Sans_CJK_SC'] text-[15px] leading-none">中</b>
        <Ico w={13}><circle cx="3.500" cy="5" r="2" stroke="#1d6fc4" strokeWidth="1.300" /><path d="M10 8h3.500v3L11 14v-3h-1z" fill="#1d6fc4" /></Ico>
        <Ico><circle cx="8" cy="8" r="7" stroke="#1d6fc4" strokeWidth="1.600" /><path d="M4.500 9c1 4 6 4 7 0" stroke="#1d6fc4" strokeWidth="1.400" /><circle cx="5.500" cy="6" r="1" fill="#1d6fc4" /><circle cx="10.500" cy="6" r="1" fill="#1d6fc4" /></Ico>
        <Ico w={14}><rect x="5" y="0" width="6" height="10" rx="3" fill="#1d6fc4" /><path d="M2.500 6v2c0 6 11 6 11 0V6M8 12v3M5 15.500h6" stroke="#1d6fc4" strokeWidth="1.700" /></Ico>
        <Ico><path d="M0 2.500h16v11H0z" fill="#1d6fc4" /><path d="M2 5.500h12M2 8h12" stroke="#fff" strokeDasharray="1.500 1" strokeWidth="1.200" /><path d="M4 11h8" stroke="#fff" /></Ico>
        <Ico w={17}><circle cx="6" cy="4" r="3.500" fill="#b5c1d0" /><path d="M0 14c0-8 12-8 12 0z" fill="#b5c1d0" /><rect x="6" y="9" width="10" height="6" fill="#c4cedb" stroke="#fff" /></Ico>
        <Ico w={14}><path d="M5 1q3 2 6 0l5 3-2 4-2-1v9H4V7L2 8 0 4z" fill="#1d6fc4" /></Ico>
        <Ico w={15}><path d="M15.500 4l-3 2.500-2.500-.5-.5-2.500L12 .5C9 0 6.500 2.500 7.300 6L1 12.300a1.900 1.900 0 0 0 2.700 2.700L10 8.700c3.500.8 6-1.700 5.500-4.700z" fill="#1d6fc4" /></Ico>
      </div>
    </div>
  );
}

export default function App() {
  return (
    <div className={`relative flex h-screen flex-col overflow-hidden bg-[#f0f0f0] ${UI}`}>
      <TitleBar />
      <MenuBar />
      <MainToolbar />
      <div className="flex min-h-0 flex-1">
        <ModuleNav />
        <main className="ml-[5px] flex min-w-0 flex-1 flex-col">
          <EditToolbar />
          <div className="mb-0.5 flex min-h-0 flex-1">
            <ComponentList />
            <PropertyEditor />
          </div>
        </main>
      </div>
      <StatusBar />
      <TaskBar />
      <ImeBar />
    </div>
  );
}
